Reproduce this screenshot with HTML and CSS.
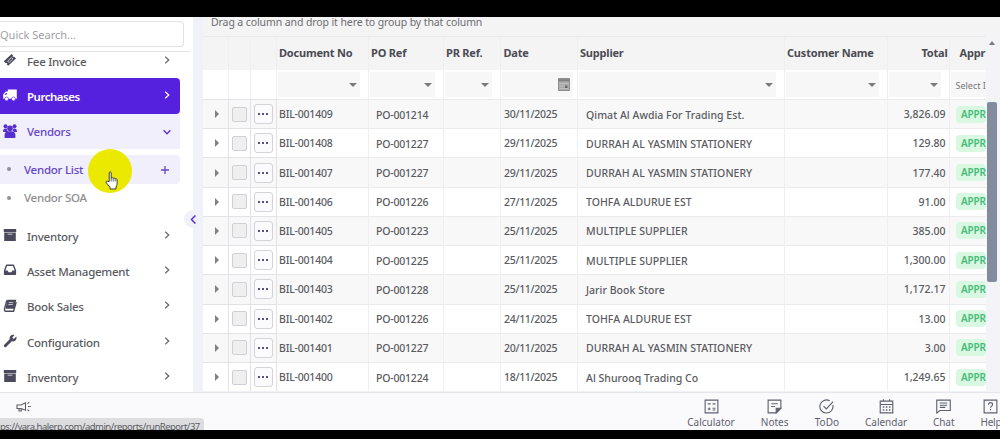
FILE: index.html
```html
<!DOCTYPE html>
<html lang="en">
<head>
    <meta charset="UTF-8">
    <meta name="viewport" content="width=device-width, initial-scale=1.0">
    <title>Purchases</title>
    <link rel="stylesheet" href="styles.css">
</head>
<body>

    <!-- Shared icons -->
    <svg class="icon-defs">
        <symbol id="chevron" viewBox="0 0 8 8"><path d="M2.2 .6 5.7 4 2.2 7.4" fill="none" stroke="currentColor" stroke-width="1.3"/></symbol>
        <symbol id="archive" viewBox="0 0 14 14"><path d="M.8 1h12.400v3H.8zM1.200 4.600h11.600v8.400H1.200z" fill="currentColor"/><path d="M4.600 6.200h4.800" stroke="#b9b9c4" stroke-width="1.100"/></symbol>
    </svg>

    <div class="screen">
        <div class="main">

            <!-- Sidebar -->
            <div class="sidebar">
                <div class="search-wrap"><div class="search">Quick Search...</div></div>
                <div class="menu">
                    <div class="menu-item">
                        <svg class="menu-icon" viewBox="0 0 14 14"><path d="M.8 8.200 8.600 1l1.300 1.200-.3 1.500 1.600.1 1.800 1.700-7.800 7.300-1.300-1.200.3-1.600-1.700-.1z" fill="currentColor"/><path d="M4.600 8.200 8.400 4.600l1.500 1.300-3.800 3.600z" fill="none" stroke="#fff" stroke-width=".7"/></svg>
                        <span class="menu-text">Fee Invoice</span><svg class="arrow"><use href="#chevron"/></svg>
                    </div>
                    <div class="menu-item active">
                        <svg class="menu-icon" viewBox="0 0 14 14"><path d="M4.800 1.500h9v9.200h-9zM.2 10.700V6.400L2.600 3.600h2.400v7.100z" fill="currentColor"/><path d="M1.500 6.800 3 5h.8v1.800z" fill="#5620df"/><circle cx="3.600" cy="10.900" r="1.900" fill="currentColor" stroke="#5620df" stroke-width=".6"/><circle cx="10.500" cy="10.900" r="1.900" fill="currentColor" stroke="#5620df" stroke-width=".6"/></svg>
                        <span class="menu-text">Purchases</span><svg class="arrow"><use href="#chevron"/></svg>
                    </div>
                    <div class="menu-item open">
                        <svg class="menu-icon" viewBox="0 0 14 14"><g fill="currentColor"><circle cx="2.500" cy="2.200" r="2"/><circle cx="11.500" cy="2.200" r="2"/><circle cx="7" cy="4.300" r="2.800"/><path d="M0 8c0-2.600 1-3.600 2.400-3.600l1.500.3c.1 1.400.6 2 1.200 3.300zM14 8c0-2.600-1-3.600-2.400-3.600l-1.500.3c-.1 1.400-.6 2-1.200 3.300zM1.600 14v-3c0-2 1.300-3.800 3.200-3.800h4.400c1.900 0 3.200 1.800 3.200 3.800v3z"/></g></svg>
                        <span class="menu-text">Vendors</span><svg class="arrow down"><use href="#chevron"/></svg>
                    </div>
                    <div class="submenu">
                        <div class="sub-item selected"><span class="dot"></span><span class="sub-text">Vendor List</span><svg class="plus" viewBox="0 0 8 8"><path d="M4 0v8M0 4h8" stroke="currentColor" stroke-width="1.300"/></svg></div>
                        <div class="sub-item"><span class="dot"></span><span class="sub-text">Vendor SOA</span></div>
                    </div>
                    <div class="menu-item">
                        <svg class="menu-icon"><use href="#archive"/></svg>
                        <span class="menu-text">Inventory</span><svg class="arrow"><use href="#chevron"/></svg>
                    </div>
                    <div class="menu-item">
                        <svg class="menu-icon" viewBox="0 0 14 14"><path d="M3.600 2.300h6.800L12.400 7.400v3.800H1.600V7.400z" fill="none" stroke="currentColor" stroke-width="1.400" stroke-linejoin="round"/><path d="M1.600 7.600h3l.9 1.600h3l.9-1.600h3v3.600H1.600z" fill="currentColor"/></svg>
                        <span class="menu-text">Asset Management</span><svg class="arrow"><use href="#chevron"/></svg>
                    </div>
                    <div class="menu-item">
                        <svg class="menu-icon" viewBox="0 0 14 14"><path d="M4.300.8h9l-2.100 9H2.500z" fill="currentColor"/><path d="M3.800 1.400 1.500 9.800c-.2 1.700.3 2.500 1.200 2.500h7.900L13.200 3" fill="none" stroke="currentColor" stroke-width="1.400"/><path d="M5.800 3.600h4.600M5.300 5.600h4.600" stroke="#fff" stroke-width=".7"/></svg>
                        <span class="menu-text">Book Sales</span><svg class="arrow"><use href="#chevron"/></svg>
                    </div>
                    <div class="menu-item">
                        <svg class="menu-icon" viewBox="0 0 14 14"><path d="M2.300 11.700 7.500 6.500" stroke="currentColor" stroke-width="2.900" stroke-linecap="round"/><path d="M11.500 1 9.500 3.300l.3 1.200 1.200.3 2.400-2.200c.6 2.600-.9 4.900-3.300 4.900-2.400 0-3.900-1.900-3.500-3.900C7 1.400 9.300.3 11.500 1z" fill="currentColor"/></svg>
                        <span class="menu-text">Configuration</span><svg class="arrow"><use href="#chevron"/></svg>
                    </div>
                    <div class="menu-item">
                        <svg class="menu-icon"><use href="#archive"/></svg>
                        <span class="menu-text">Inventory</span><svg class="arrow"><use href="#chevron"/></svg>
                    </div>
                </div>
                <div class="collapse"><svg viewBox="0 0 8 8"><path d="M5.700.4 2.200 4l3.500 3.600" fill="none" stroke="currentColor" stroke-width="1.300"/></svg></div>
            </div>

            <!-- Bills grid -->
            <div class="grid">
                <div class="group-bar">Drag a column and drop it here to group by that column</div>
                <div class="grid-body">
                    <div class="table">
                        <div class="row header">
                            <div></div><div></div><div></div>
                            <div>Document No</div><div>PO Ref</div><div>PR Ref.</div><div>Date</div><div>Supplier</div><div>Customer Name</div><div class="right">Total</div><div class="status">Appr</div>
                        </div>
                        <div class="row filters">
                            <div></div><div></div><div></div>
                            <div><span class="filter"><i class="caret"></i></span></div>
                            <div><span class="filter"><i class="caret"></i></span></div>
                            <div><span class="filter"><i class="caret"></i></span></div>
                            <div class="date-cell"><span class="filter date"><svg viewBox="0 0 12 13"><path d="M.5.5h11v12H.5z" fill="#a9a9a9" stroke="#8f8f8f"/><path d="M.5 2.200h11" stroke="#808080" stroke-width="2"/><path d="M1.500 5.500h9M1.500 8h9M1.500 10.500h9" stroke="#c9c9c9" stroke-width=".7"/><path d="M7 7.500h2.500v2.500H7z" fill="#666"/></svg></span></div>
                            <div><span class="filter"><i class="caret"></i></span></div>
                            <div><span class="filter"><i class="caret"></i></span></div>
                            <div><span class="filter"><i class="caret"></i></span></div>
                            <div><span class="filter select">Select I</span></div>
                        </div>
                        <div id="rows"></div>
                    </div>
                    <div class="scroll">
                        <i class="scroll-up"></i>
                        <div class="thumb"></div>
                    </div>
                </div>
            </div>
        </div>

        <!-- Bottom toolbar -->
        <div class="toolbar">
            <svg class="horn" viewBox="0 0 16 12"><path d="M1 4h4l4.500-2.200v7.400L5 7.500H1zM3 7.500V10h2.200V7.500" fill="none" stroke="currentColor" stroke-width="1.100"/><path d="m11.500 2.600 1.700-1.400M12 5.500h2.800M11.500 8.600l1.700 1.500" stroke="currentColor" stroke-width="1.100"/></svg>
            <div class="tools">
                <div class="tool calc"><svg viewBox="0 0 16 16"><path d="M1.200 1.200h13.600v13.600H1.200z"/><path d="M4 5.200h3M9.200 5.200h3M4 10.600h3M5.500 9.100v3M9.200 9.800h3M9.200 11.700h3"/></svg>Calculator</div>
                <div class="tool notes"><svg viewBox="0 0 16 16"><path d="M1.200 1.200h13.600v8.600l-5 5H1.200zM4.500 5h7M4.500 8h4"/><path d="M9.800 9.800h5l-5 5z" fill="currentColor"/></svg>Notes</div>
                <div class="tool todo"><svg viewBox="0 0 16 16"><path d="M14.800 6.600A7 7 0 1 1 11.400 1.900M4.800 7.600l3 3 7.200-7.800"/></svg>ToDo</div>
                <div class="tool calendar"><svg viewBox="0 0 16 16"><path d="M1.300 2.300h13.400v12.500H1.300zM1.300 5.800h13.400M4.700.3v2.500M11.300.3v2.500"/><path d="M4 8.500h8.500M4 11.700h8.500" stroke-width="1.600" stroke-dasharray="1.600 1.700"/></svg>Calendar</div>
                <div class="tool chat"><svg viewBox="0 0 16 16"><path d="M.8 1.200h14.400v11H4.200L.8 14.900zM4 4.300h8M4 6.600h8M4 8.900h6"/></svg>Chat</div>
                <div class="tool help"><svg viewBox="0 0 16 16"><path d="M1.200 1.200h13.600v13.600H1.200z"/><path d="M5.900 6.100c0-1.400 1-2.200 2.200-2.200s2.100.8 2.100 2c0 1.600-2.100 1.700-2.100 3.400M8.100 10.700V12"/></svg>Help</div>
            </div>
            <div class="link-status">ps://yara.halerp.com/admin/reports/runReport/37</div>
        </div>
    </div>

    <!-- Pointer with click highlight -->
    <div class="pointer">
        <svg viewBox="0 0 14 19"><path d="M4.200 10.600V2c0-1.500 2-1.500 2 0v5.200c.3-1 1.900-.9 2 .3.400-.8 1.800-.7 2 .5.500-.7 1.900-.4 1.900.8v4.400c0 1.200-.8 2-1.100 2.900V18H5v-1.700L1.300 11.900c-.9-1.300.5-2.300 1.500-1.500z" fill="#fff" stroke="#3c3c46" stroke-width="1"/><path d="M6.200 7v3.500M8.200 7.500v3M10.200 8v2.500" stroke="#3c3c46" stroke-width=".8"/></svg>
    </div>

    <script>
        const bills = [
            ['BIL-001409', 'PO-001214', '30/11/2025', 'Qimat Al Awdia For Trading Est.', '3,826.09'],
            ['BIL-001408', 'PO-001227', '29/11/2025', 'DURRAH AL YASMIN STATIONERY', '129.80'],
            ['BIL-001407', 'PO-001227', '29/11/2025', 'DURRAH AL YASMIN STATIONERY', '177.40'],
            ['BIL-001406', 'PO-001226', '27/11/2025', 'TOHFA ALDURUE EST', '91.00'],
            ['BIL-001405', 'PO-001223', '25/11/2025', 'MULTIPLE SUPPLIER', '385.00'],
            ['BIL-001404', 'PO-001225', '25/11/2025', 'MULTIPLE SUPPLIER', '1,300.00'],
            ['BIL-001403', 'PO-001228', '25/11/2025', 'Jarir Book Store', '1,172.17'],
            ['BIL-001402', 'PO-001226', '24/11/2025', 'TOHFA ALDURUE EST', '13.00'],
            ['BIL-001401', 'PO-001227', '20/11/2025', 'DURRAH AL YASMIN STATIONERY', '3.00'],
            ['BIL-001400', 'PO-001224', '18/11/2025', 'Al Shurooq Trading Co', '1,249.65']
        ];

        document.getElementById('rows').innerHTML = bills.map(b => `
            <div class="row bill">
                <div class="center"><i class="expand"></i></div>
                <div class="center"><span class="check"></span></div>
                <div class="center"><span class="more"><i></i><i></i><i></i></span></div>
                <div class="code">${b[0]}</div>
                <div class="inset code">${b[1]}</div>
                <div></div>
                <div class="day">${b[2]}</div>
                <div class="inset name">${b[3]}</div>
                <div></div>
                <div class="right">${b[4]}</div>
                <div class="status"><span class="badge">APPR</span></div>
            </div>`).join('');
    </script>
</body>
</html>
```
FILE: styles.css
```css
* {
    box-sizing: border-box;
}

body {
    margin: 0;
    height: 439px;
    padding: 17px 0 9px;
    background-color: #000;
    font-family: 'Noto Sans', 'Open Sans', sans-serif;
    color: #5a5b61;
    overflow: hidden;
}

.icon-defs {
    display: none;
}

.screen {
    height: 413px;
    display: flex;
    flex-direction: column;
    background-color: #f1f1f8;
}

.main {
    height: 374.5px;
    display: flex;
}

/* Sidebar */
.sidebar {
    width: 203px;
    flex: none;
    border-right: 10px solid #f1f1f9;
    background-color: #fff;
    position: relative;
    display: flex;
    flex-direction: column;
}

.search-wrap {
    height: 34.5px;
    margin-right: 3px;
    padding-top: 4px;
    border-bottom: 1px solid #e1e1e6;
}

.search {
    width: 184px;
    height: 26px;
    border: 1px solid #e2e2e6;
    border-left: none;
    border-radius: 0 4px 4px 0;
    font-size: 11px;
    line-height: 26px;
    color: #a0a0a6;
}

.menu {
    flex: 1;
    width: 180px;
    overflow: hidden;
}

.menu-item {
    height: 35.3px;
    padding: 0 9px 0 3px;
    display: flex;
    align-items: center;
    font-size: 11.5px;
    font-weight: 500;
    letter-spacing: -0.25px;
}

.menu-item:first-child {
    margin-top: -8.5px;
}

.menu-icon {
    width: 14px;
    height: 14px;
    margin: 0 10px 1px 0;
    color: #4b4a5c;
}

.menu-text {
    flex: 1;
    padding-top: 1px;
}

.arrow {
    width: 8px;
    height: 8px;
    margin-bottom: 1.5px;
    color: #66676d;
}

.arrow.down {
    margin: 2px 0 0;
    transform: rotate(90deg);
}

.menu-item.active {
    background-color: #5620df;
    border-radius: 0 4px 4px 0;
    color: #fff;
    font-weight: 600;
    letter-spacing: -0.5px;
}

.active .menu-icon,
.active .arrow {
    color: #fff;
}

.menu-item.open {
    background-color: #f1effb;
    color: #6446c6;
}

.open .menu-icon,
.open .arrow {
    color: #5530cf;
}

.submenu {
    padding: 6px 0 5.5px;
}

.sub-item {
    height: 28.8px;
    padding: 0 11px 0 7px;
    display: flex;
    align-items: center;
    font-size: 11.5px;
    font-weight: 500;
    letter-spacing: -0.25px;
    color: #8e8e92;
}

.sub-item.selected {
    background-color: #f1effb;
    border-radius: 0 4px 4px 0;
    color: #6446c6;
}

.sub-item:last-child {
    height: 27.8px;
    margin-bottom: 1px;
}

.dot {
    width: 4px;
    height: 4px;
    margin-right: 13px;
    border-radius: 50%;
    background-color: #8f8f96;
}

.sub-text {
    flex: 1;
}

.plus {
    width: 8px;
    height: 8px;
    margin-top: 2px;
}

.collapse {
    position: absolute;
    left: 184px;
    top: 193px;
    width: 18px;
    height: 18px;
    border-radius: 50%;
    background-color: #f1f1f9;
    display: flex;
    align-items: center;
    justify-content: center;
    color: #5530cf;
}

.collapse svg {
    width: 9px;
    height: 9px;
}

/* Grid */
.grid {
    flex: 1;
    min-width: 0;
    display: flex;
    flex-direction: column;
}

.group-bar {
    height: 19px;
    padding-left: 8px;
    background-color: #f4f4f5;
    font-size: 10.5px;
    line-height: 11px;
    letter-spacing: -0.1px;
    color: #6c6c70;
}

.grid-body {
    flex: 1;
    display: flex;
}

.table {
    width: 783px;
    overflow: hidden;
}

.row {
    display: grid;
    grid-template-columns: 25.5px 22.5px 25.5px 92px 75px 57.5px 76.5px 207px 103px 62px 36.5px;
}

.row > div {
    padding-left: 2.5px;
    border-right: 1px solid #efeff1;
    border-top: 1px solid #ebebed;
    display: flex;
    align-items: center;
    white-space: nowrap;
    overflow: hidden;
}

.row > div:last-child {
    border-right: none;
}

.row > .center {
    padding: 0;
    justify-content: center;
    border-color: #e3e3e7;
}

.row > .right {
    padding-right: 3px;
    justify-content: flex-end;
}

.row.header {
    height: 34px;
    background-color: #f4f4f5;
    font-size: 11px;
    font-weight: 700;
    letter-spacing: -0.2px;
    color: #4b4b53;
}

.row.header > div {
    padding-bottom: 2.5px;
}

.row.header > .right {
    padding-right: 1px;
}

.row.header > .status {
    padding-left: 10px;
}

.row.filters {
    height: 29px;
    background-color: #fff;
}

.row.filters > div {
    padding: 1px 8px 2px 1px;
    border-top: none;
}

.row.filters > .date-cell {
    padding-right: 4px;
}

.filter {
    flex: 1;
    height: 25px;
    padding-right: 3px;
    background-color: #f7f7f8;
    display: flex;
    align-items: center;
    justify-content: flex-end;
}

.row.filters > div:last-child {
    padding-right: 0;
}

.filter.select {
    padding: 2px 0 0 5px;
    justify-content: flex-start;
    font-size: 9px;
    color: #77777b;
}

.caret {
    margin-top: 2px;
    border: 4px solid transparent;
    border-top-color: #7b7b7f;
    border-bottom: none;
}

.filter.date svg {
    width: 12px;
    height: 13px;
}

.row.bill {
    height: 29.22px;
    background-color: #fff;
    font-size: 10.5px;
    font-weight: 500;
}

.row.bill:nth-child(odd) {
    background-color: #f8f8f9;
}

.row.bill > .code {
    letter-spacing: -0.2px;
}

.row.bill > .day {
    padding-left: 3px;
    letter-spacing: -0.3px;
}

.row.bill > .inset {
    padding: 1px 0 0 7.5px;
}

.row.bill > .name {
    padding-left: 8.5px;
    letter-spacing: 0.03px;
}

.row.bill > .status {
    padding-left: 6.5px;
}

.expand {
    margin-left: 4px;
    border: 4px solid transparent;
    border-left-color: #808084;
    border-right: none;
}

.check {
    width: 15px;
    height: 15px;
    border: 1px solid #d0d0d4;
    border-radius: 2px;
    background-color: #efeff0;
}

.more {
    width: 19.5px;
    height: 20px;
    border: 1px solid #d3d3d8;
    border-radius: 3px;
    background-color: #fbfbfd;
    display: flex;
    align-items: center;
    justify-content: center;
    gap: 2px;
}

.more i {
    width: 2px;
    height: 2px;
    background-color: #56547c;
}

.badge {
    width: 36px;
    height: 17px;
    padding-left: 5px;
    border-radius: 4px;
    background-color: #d9f8e2;
    font-size: 10px;
    font-weight: 600;
    line-height: 17px;
    letter-spacing: -0.2px;
    color: #45bc78;
}

.scroll {
    width: 14px;
    padding: 5px 3px 0 1px;
    background-color: #f3f3f8;
    display: flex;
    flex-direction: column;
    align-items: center;
}

.scroll-up {
    border: 3.5px solid transparent;
    border-bottom: 4px solid #77777b;
    border-top: none;
}

.thumb {
    width: 10px;
    height: 180px;
    margin-top: 57px;
    border-radius: 2px;
    background-color: #838c9c;
}

/* Bottom toolbar */
.toolbar {
    flex: 1;
    border-top: 1px solid #e6e7ec;
    background-color: #fafafc;
    position: relative;
    display: flex;
    overflow: hidden;
}

.horn {
    flex: none;
    width: 16px;
    height: 12px;
    margin: 8px 0 0 16px;
    color: #5f6068;
}

.tools {
    margin-left: 655px;
    display: flex;
    gap: 25.7px;
}

.tool {
    flex: none;
    padding-top: 6.5px;
    display: flex;
    flex-direction: column;
    align-items: center;
    font-size: 10px;
    line-height: 15px;
    color: #5f6070;
}

.tool svg {
    flex: none;
    width: 15px;
    height: 15px;
    margin-bottom: 1px;
    fill: none;
    stroke: currentColor;
    stroke-width: 1.2;
}

.calc {
    width: 48px;
}

.notes {
    width: 28px;
}

.todo {
    width: 25px;
}

.calendar {
    width: 42px;
}

.chat {
    width: 22px;
}

.help {
    width: 21px;
    letter-spacing: -0.2px;
}

.link-status {
    position: absolute;
    left: 0;
    bottom: 0;
    width: 204px;
    height: 12px;
    padding-left: 0;
    border-radius: 0 4px 0 0;
    background-color: #dddde0;
    font-size: 9.5px;
    line-height: 17px;
    letter-spacing: -0.52px;
    white-space: nowrap;
    overflow: hidden;
}

/* Pointer */
.pointer {
    position: absolute;
    left: 88px;
    top: 149px;
    width: 44px;
    height: 44px;
    border-radius: 50%;
    background-color: #ebe900;
}

.pointer svg {
    width: 14px;
    height: 19px;
    margin: 22px 0 0 17px;
}
```
